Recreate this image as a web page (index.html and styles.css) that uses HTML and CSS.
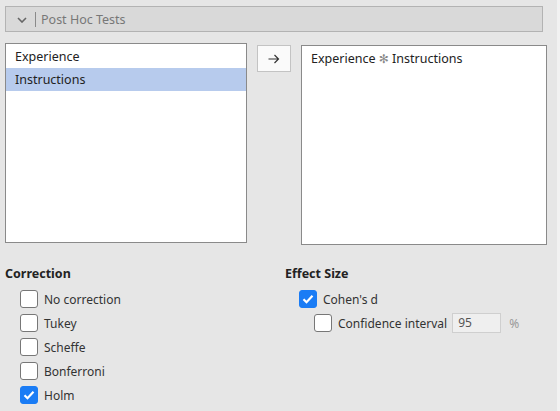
FILE: index.html
```html
<!DOCTYPE html>
<html>
<head>
<meta charset="utf-8">
<link rel="stylesheet" href="styles.css">
</head>
<body>
<div class="page">
  <div class="panel">
    <div class="header">
      <svg class="chev" width="10" height="6" viewBox="0 0 10 6"><path d="M1 1 L5 5 L9 1" fill="none" stroke="#666" stroke-width="1.6"/></svg>
      <span class="sep"></span>
      <span class="title">Post Hoc Tests</span>
    </div>
    <div class="lists">
      <div class="listbox left">
        <div class="item">Experience</div>
        <div class="item selected">Instructions</div>
      </div>
      <div class="btn">
        <svg width="12" height="10" viewBox="0 0 12 10"><path d="M0.5 5 H10.5 M6.5 1 L10.5 5 L6.5 9" fill="none" stroke="#333" stroke-width="1.2"/></svg>
      </div>
      <div class="listbox right">
        <div class="item">Experience <span class="star">✻</span> Instructions</div>
      </div>
    </div>
    <div class="options">
      <div class="col col-left">
        <div class="heading">Correction</div>
        <div class="checks">
          <label class="row"><span class="box"></span>No correction</label>
          <label class="row"><span class="box"></span>Tukey</label>
          <label class="row"><span class="box"></span>Scheffe</label>
          <label class="row"><span class="box"></span>Bonferroni</label>
          <label class="row"><span class="box on"><svg width="12" height="10" viewBox="0 0 12 10"><path d="M1.5 5.2 L4.5 8.2 L10.5 1.8" fill="none" stroke="#fff" stroke-width="2.2"/></svg></span>Holm</label>
        </div>
      </div>
      <div class="col col-right">
        <div class="heading">Effect Size</div>
        <div class="checks">
          <label class="row"><span class="box on"><svg width="12" height="10" viewBox="0 0 12 10"><path d="M1.5 5.2 L4.5 8.2 L10.5 1.8" fill="none" stroke="#fff" stroke-width="2.2"/></svg></span>Cohen's d</label>
          <div class="row sub"><span class="box"></span>Confidence interval<span class="field">95</span><span class="pct">%</span></div>
        </div>
      </div>
    </div>
  </div>
  <div class="gutter"></div>
</div>
</body>
</html>
```

FILE: styles.css
```css
html, body {
  margin: 0;
  padding: 0;
}
body {
  width: 560px;
  height: 411px;
  overflow: hidden;
  background: #e6e6e6;
  font-family: "Noto Sans", "Open Sans", sans-serif;
  font-size: 12px;
  color: #333;
}
.page {
  display: flex;
  height: 411px;
}
.panel {
  flex: 1;
  padding: 6px 0 0 5px;
}
.gutter {
  width: 3px;
  background: #f2f2f2;
}
.header {
  width: 536px;
  height: 24px;
  border: 1px solid #b3b3b3;
  background: #d9d9d9;
  display: flex;
  align-items: center;
}
.chev {
  margin-left: 11px;
  margin-top: 1px;
}
.sep {
  width: 1px;
  height: 15px;
  background: #8a8a8a;
  margin-left: 8px;
  margin-right: 5px;
}
.title {
  color: #777;
  font-size: 12.5px;
}
.lists {
  display: flex;
  align-items: flex-start;
  margin-top: 11px;
}
.listbox {
  background: #fff;
  border: 1px solid #8a8a8a;
  box-sizing: border-box;
}
.left {
  width: 242px;
  height: 200px;
  padding-top: 1px;
}
.right {
  width: 246px;
  height: 200px;
  margin-top: 2px;
  padding-top: 1px;
}
.item {
  height: 23px;
  line-height: 23px;
  padding-left: 9px;
  color: #222;
  font-size: 12.5px;
}
.star {
  font-family: "DejaVu Sans", sans-serif;
  font-size: 12px;
  color: #888;
  font-weight: normal;
}
.selected {
  background: #b7cbed;
}
.btn {
  width: 32px;
  height: 25px;
  margin: 2px 10px 0 10px;
  background: #fafafa;
  border: 1px solid #c3c3c3;
  display: flex;
  align-items: center;
  justify-content: center;
}
.options {
  display: flex;
  margin-top: 20px;
}
.col-left {
  width: 280px;
}
.heading {
  font-weight: bold;
  color: #222;
  height: 18px;
  line-height: 18px;
  font-size: 12.5px;
}
.checks {
  padding-left: 15px;
  margin-top: 7px;
  display: flex;
  flex-direction: column;
  gap: 6px;
}
.row {
  display: flex;
  align-items: center;
  height: 18px;
  color: #333;
}
.box {
  width: 16px;
  height: 16px;
  border: 1px solid #777;
  border-radius: 3px;
  background: #fff;
  margin-right: 6px;
  display: flex;
  align-items: center;
  justify-content: center;
  flex: none;
}
.box.on {
  background: #1a7cf5;
  border-color: #1a7cf5;
}
.col-right .checks {
  padding-left: 14px;
}
.sub {
  margin-left: 15px;
}
.field {
  width: 42px;
  height: 18px;
  line-height: 18px;
  border: 1px solid #cfcfcf;
  background: #efefef;
  margin-left: 5px;
  padding-left: 5px;
  color: #555;
}
.pct {
  margin-left: 8px;
  color: #999;
}
```
